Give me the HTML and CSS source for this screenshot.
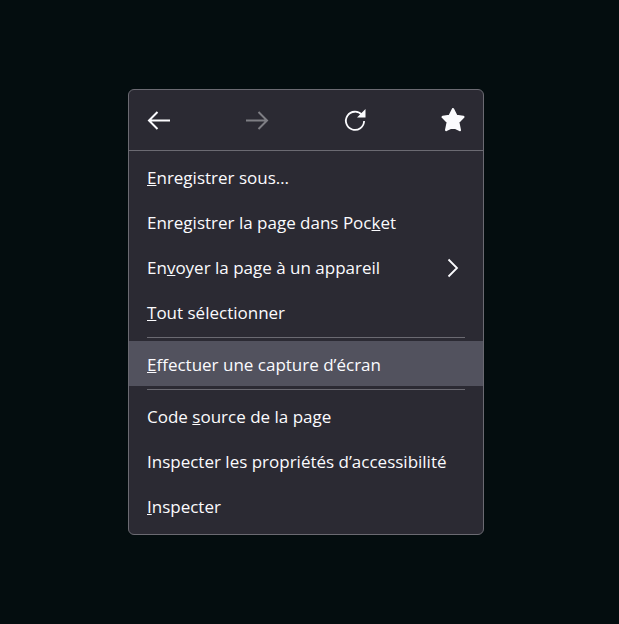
FILE: index.html
```html
<!DOCTYPE html>
<html lang="fr">
<head>
    <meta charset="UTF-8">
    <meta name="viewport" content="width=device-width, initial-scale=1.0">
    <title>Menu contextuel</title>
    <link rel="stylesheet" href="styles.css">
</head>
<body>
    <div class="menu">
        <div class="nav-bar">
            <svg class="nav-icon" viewBox="0 0 24 24"><path d="M23 12.500H2M10.500 4 2 12.500l8.500 8.500"/></svg>
            <svg class="nav-icon nav-disabled" viewBox="0 0 24 24"><path d="M1 12.500h21M13.500 4l8.500 8.500-8.500 8.500"/></svg>
            <svg class="nav-icon nav-thin" viewBox="0 0 24 24"><path d="M19 7A9.100 9.100 0 1 0 21.100 13"/><path class="fill" d="M22.500 1v8.500H14z"/></svg>
            <svg class="nav-icon" viewBox="0 0 24 24"><path class="star" d="M12 1.200 15.400 8 22.300 9 17.200 14.200 18.800 22 12 18.600 5.200 22 6.800 14.200 1.700 9 8.600 8z"/></svg>
        </div>
        <ul class="items">
            <li class="item"><span><u>E</u>nregistrer sous…</span></li>
            <li class="item"><span>Enregistrer la page dans Poc<u>k</u>et</span></li>
            <li class="item"><span>En<u>v</u>oyer la page à un appareil</span>
                <svg class="chevron" viewBox="0 0 12 20"><path d="M1.500 1.500 10 10l-8.500 8.500"/></svg>
            </li>
            <li class="item"><span><u>T</u>out sélectionner</span></li>
            <li class="separator sep-top"></li>
            <li class="item item-active"><span><u>E</u>ffectuer une capture d’écran</span></li>
            <li class="separator sep-bottom"></li>
            <li class="item"><span>Code <u>s</u>ource de la page</span></li>
            <li class="item"><span>Inspecter les propriétés d’accessibilité</span></li>
            <li class="item"><span><u>I</u>nspecter</span></li>
        </ul>
    </div>
</body>
</html>
```

FILE: styles.css
```css
body {
    margin: 0;
    min-height: 624px;
    background-color: #040d0f;
    color: #fbfbfe;
    font-family: 'Open Sans', sans-serif;
    font-size: 17px;
}
.menu {
    box-sizing: border-box;
    width: 356px;
    height: 446px;
    margin: 89px 0 0 128px;
    background-color: #2b2a33;
    border: 1px solid #6b6a72;
    border-radius: 6px;
    overflow: hidden;
}
.nav-bar {
    display: flex;
    justify-content: space-between;
    align-items: center;
    height: 60px;
    padding: 0 18px;
    border-bottom: 1px solid #6b6a72;
}
.nav-icon {
    width: 24px;
    height: 24px;
    fill: none;
    stroke: #fbfbfe;
    stroke-width: 2;
}
.nav-thin {
    stroke-width: 1.8;
}
.nav-icon .fill {
    fill: #fbfbfe;
    stroke: none;
}
.nav-icon .star {
    fill: #fbfbfe;
    stroke-width: 2.4;
    stroke-linejoin: round;
}
.nav-disabled {
    opacity: 0.4;
}
.items {
    list-style: none;
    margin: 0;
    padding: 4px 0 0;
}
.item {
    box-sizing: border-box;
    display: flex;
    justify-content: space-between;
    align-items: center;
    height: 45px;
    padding: 0 24px 0 18px;
}
.item-active {
    padding-top: 2px;
    background-color: #52525e;
}
.chevron {
    width: 12px;
    height: 20px;
    fill: none;
    stroke: #fbfbfe;
    stroke-width: 1.8;
}
.separator {
    height: 1px;
    margin: 0 18px;
    background-color: #6b6a72;
}
.sep-top {
    margin-top: 2px;
    margin-bottom: 3px;
}
.sep-bottom {
    margin-top: 3px;
    margin-bottom: 4px;
}
```
